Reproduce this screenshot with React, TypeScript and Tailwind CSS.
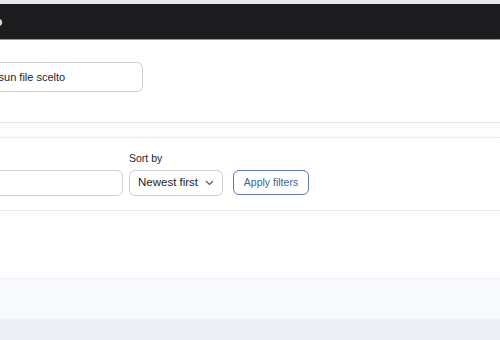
import React from "react";

export default function App() {
  return (
    <div
      className="w-[500px] h-[340px] overflow-hidden bg-white flex flex-col"
      style={{ fontFamily: "'Liberation Sans', Arial, sans-serif" }}
    >
      <div className="h-[4px] shrink-0 bg-[#e9e9eb]" />
      <div className="h-[36px] shrink-0 bg-[#1c1c1e] border-b border-[#9a9a9c] flex items-center overflow-hidden">
        <span className="-ml-[5px] text-[12px] font-bold text-[#f3e9e9]">o</span>
      </div>
      <div className="h-[83px] shrink-0 bg-white border-b border-[#e6e6e9] shadow-[0_1px_3px_rgba(0,0,0,0.06)] pt-[22px]">
        <div className="-ml-[24px] w-[167px] h-[30px] rounded-[6px] border border-[#cfcfd2] flex items-center pl-[2px] text-[11px] text-[#1d1d1f] overflow-hidden whitespace-nowrap">
          Nessun file scelto
        </div>
      </div>
      <div className="h-[14px] shrink-0 bg-[#fdfdfd]" />
      <div className="h-[74px] shrink-0 bg-white border-y border-[#ececef] shadow-[0_1px_3px_rgba(0,0,0,0.06)] pt-[13px] flex items-start gap-[6px]">
        <div className="flex flex-col gap-[5px] -ml-[40px]">
          <div className="h-[14px]" />
          <div className="w-[163px] h-[26px] rounded-[6px] border border-[#cfcfd2]" />
        </div>
        <div className="flex flex-col gap-[5px]">
          <span className="text-[10.5px] text-[#1d1d1f] leading-[14px] whitespace-nowrap">Sort by</span>
          <div className="w-[94px] h-[26px] rounded-[6px] border border-[#cfcfd2] flex items-center justify-between pl-[8px] pr-[8px]">
            <span className="text-[11.5px] text-[#1d1d1f] whitespace-nowrap">Newest first</span>
            <svg width="9" height="6" viewBox="0 0 9 6" fill="none">
              <path d="M1 1l3.5 3.5L8 1" stroke="#555" strokeWidth="1.1" />
            </svg>
          </div>
        </div>
        <div className="pt-[19px] ml-[4px]">
          <div className="w-[76px] h-[25px] rounded-[6px] border border-[#5b7db3] flex items-center justify-center text-[10.5px] text-[#34649f] whitespace-nowrap">
            Apply filters
          </div>
        </div>
      </div>
      <div className="h-[67px] shrink-0 bg-white" />
      <div className="h-[42px] shrink-0 bg-[#f8f9fc] border-t border-[#f0f1f4] border-b border-[#dfe0e5]" />
      <div className="flex-1 bg-[#eeeff4]" />
    </div>
  );
}
